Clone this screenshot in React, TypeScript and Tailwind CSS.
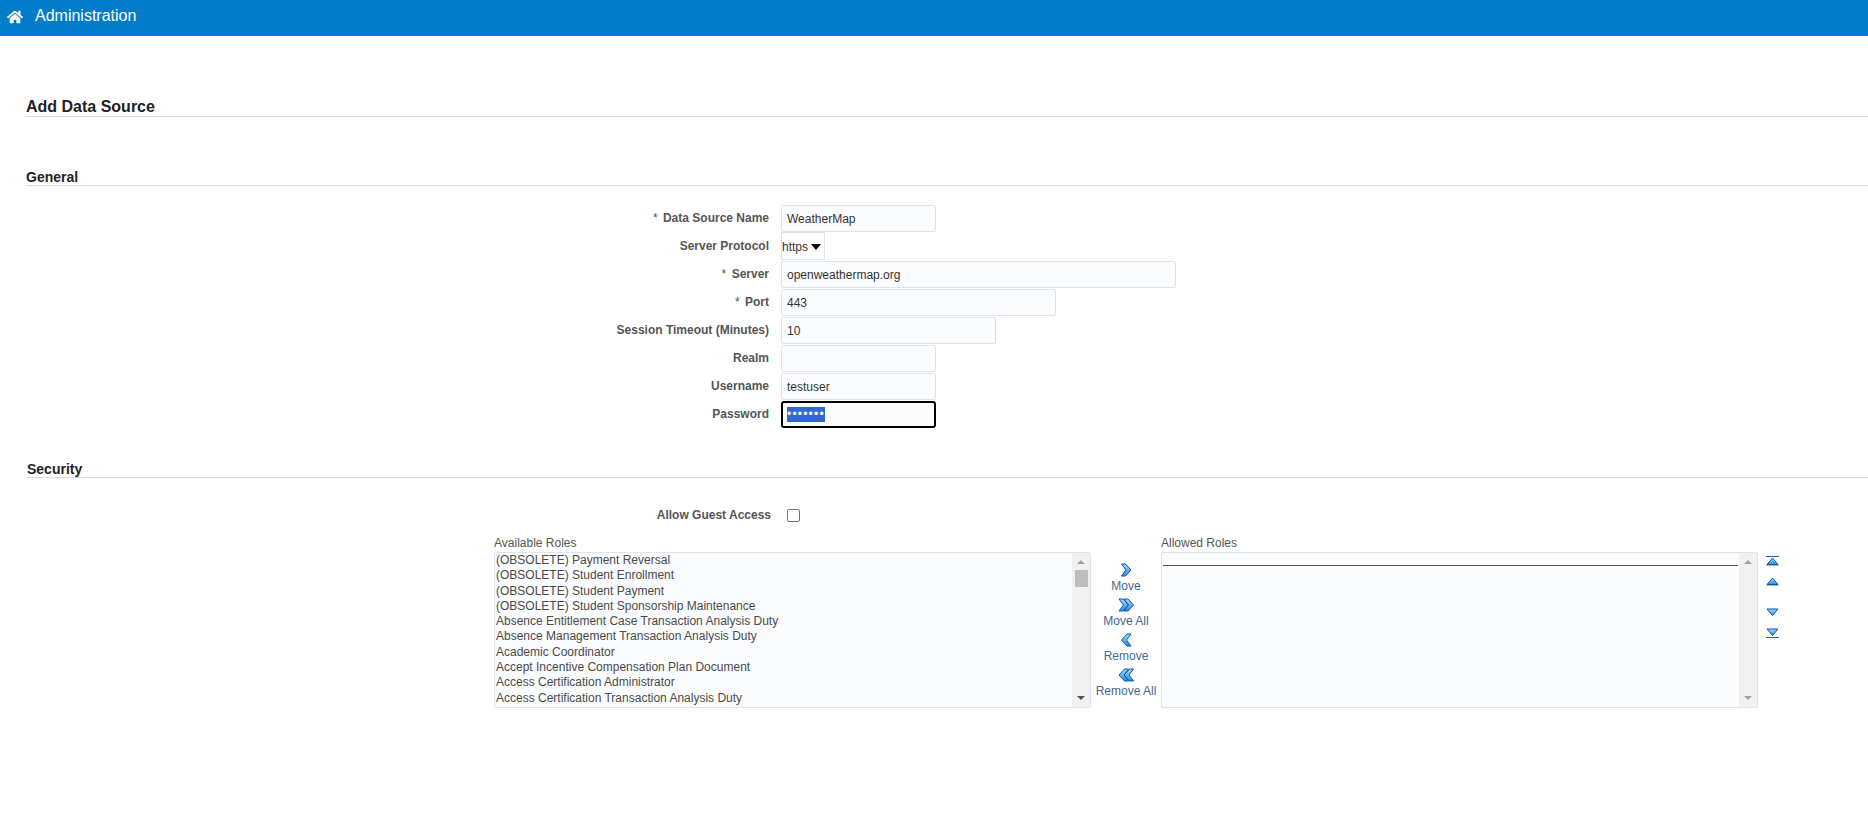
import { FaHome } from "react-icons/fa";

const roles = [
  "(OBSOLETE) Payment Reversal",
  "(OBSOLETE) Student Enrollment",
  "(OBSOLETE) Student Payment",
  "(OBSOLETE) Student Sponsorship Maintenance",
  "Absence Entitlement Case Transaction Analysis Duty",
  "Absence Management Transaction Analysis Duty",
  "Academic Coordinator",
  "Accept Incentive Compensation Plan Document",
  "Access Certification Administrator",
  "Access Certification Transaction Analysis Duty",
];

function Row({ label, required, children }: { label: string; required?: boolean; children: React.ReactNode }) {
  return (
    <div className="flex items-center h-[28px]">
      <div className="w-[769px] text-right text-[12px] font-bold text-[#555] leading-none">
        {required && <span className="font-normal mr-[2px]">* </span>}
        {label}
      </div>
      <div className="ml-[12px] flex">{children}</div>
    </div>
  );
}

function TextBox({ width, value }: { width: string; value?: string }) {
  return (
    <div className={`${width} h-[27px] bg-[#fbfcfe] border border-[#dfe4ea] rounded-[2px] px-[5px] pt-[1px] flex items-center text-[12px] text-[#333]`}>
      {value}
    </div>
  );
}

function ChevronDefs() {
  return (
    <svg width="0" height="0" className="absolute">
      <defs>
        <linearGradient id="shuttleBlue" x1="0" y1="0" x2="0" y2="1">
          <stop offset="0" stopColor="#a5dafc" />
          <stop offset="1" stopColor="#2a8be6" />
        </linearGradient>
      </defs>
    </svg>
  );
}

function Chevron({ dir, double }: { dir: "left" | "right"; double?: boolean }) {
  const single = dir === "right" ? "M1 1 L5 1 L10.5 7 L5 13 L1 13 L5.5 7 Z" : "M10.5 1 L6.5 1 L1 7 L6.5 13 L10.5 13 L6 7 Z";
  const shift = double ? (dir === "right" ? ["translate(0 0)", "translate(5 0)"] : ["translate(5 0)", "translate(0 0)"]) : ["translate(2.5 0)"];
  return (
    <svg width="16" height="14" viewBox="0 0 16 14" className="block">
      {shift.map((t) => (
        <path key={t} d={single} transform={t} fill="url(#shuttleBlue)" stroke="#0a55a8" strokeWidth="1" strokeLinejoin="round" />
      ))}
    </svg>
  );
}

function ShuttleButton({ label, dir, double }: { label: string; dir: "left" | "right"; double?: boolean }) {
  return (
    <div className="flex flex-col items-center h-[35px]">
      <Chevron dir={dir} double={double} />
      <div className="text-[12px] leading-[14px] mt-[2px] text-[#44698f] whitespace-nowrap">{label}</div>
    </div>
  );
}

function ReorderIcon({ up, bar }: { up?: boolean; bar?: boolean }) {
  return (
    <svg width="13" height="10" viewBox="0 0 13 10" className="block">
      {up ? (
        <>
          {bar && <rect x="0" y="0" width="13" height="1" fill="#1f5fb8" />}
          <path d="M6.5 2 L12 8.5 L1 8.5 Z" fill="url(#shuttleBlue)" stroke="#0a55a8" strokeWidth="1" />
          <rect x="0" y="9" width="13" height="1" fill="#b5b9c0" />
        </>
      ) : (
        <>
          <path d="M1 1 L12 1 L6.5 7.5 Z" fill="url(#shuttleBlue)" stroke="#0a55a8" strokeWidth="1" />
          {bar && <rect x="0" y="9" width="13" height="1" fill="#1f5fb8" />}
        </>
      )}
    </svg>
  );
}

function ScrollBar({ thumb, dark }: { thumb?: boolean; dark?: boolean }) {
  return (
    <div className="w-[18px] bg-[#f1f1f1] flex flex-col items-center justify-between py-[7px]">
      <div className="flex flex-col items-center w-full">
        <div className="w-0 h-0 border-x-[4px] border-x-transparent border-b-[4px] border-b-[#a3a3a3]" />
        {thumb && <div className="w-[13px] h-[17px] bg-[#bdbdbd] mt-[6px]" />}
      </div>
      <div className={`w-0 h-0 border-x-[4px] border-x-transparent border-t-[4px] ${dark ? "border-t-[#505050]" : "border-t-[#a3a3a3]"}`} />
    </div>
  );
}

export default function App() {
  return (
    <div className="w-full min-h-screen bg-white font-['Liberation_Sans',Arial,sans-serif]">
      <ChevronDefs />

      {/* Header */}
      <div className="h-[36px] bg-[#007cc8] flex items-center pl-[7px] pb-[4px] text-white">
        <FaHome className="w-[16px] h-[16px] mt-[1px]" />
        <span className="ml-[12px] text-[16px]">Administration</span>
      </div>

      <div className="pl-[26px]">
        <div className="mt-[62px] h-[19px] border-b border-[#d6dde6] text-[16px] font-bold leading-[18px] text-[#222]">
          Add Data Source
        </div>

        <div className="mt-[53px] h-[16px] border-b border-[#d6dde6] text-[14px] font-bold leading-[14px] text-[#222]">
          General
        </div>
      </div>

      {/* General form */}
      <div className="mt-[18px] flex flex-col">
        <Row label="Data Source Name" required>
          <TextBox width="w-[155px]" value="WeatherMap" />
        </Row>
        <Row label="Server Protocol">
          <div className="w-[44px] h-[28px] border border-[#dfe4ea] flex items-center pt-[1px] text-[12px] text-[#333]">
            https
            <span className="ml-[3px] w-0 h-0 border-x-[5.5px] border-x-transparent border-t-[6px] border-t-black" />
          </div>
        </Row>
        <Row label="Server" required>
          <TextBox width="w-[395px]" value="openweathermap.org" />
        </Row>
        <Row label="Port" required>
          <TextBox width="w-[275px]" value="443" />
        </Row>
        <Row label="Session Timeout (Minutes)">
          <TextBox width="w-[215px]" value="10" />
        </Row>
        <Row label="Realm">
          <TextBox width="w-[155px]" />
        </Row>
        <Row label="Username">
          <TextBox width="w-[155px]" value="testuser" />
        </Row>
        <Row label="Password">
          <div className="w-[155px] h-[27px] bg-[#fbfcfe] border-2 border-black rounded-[3px] pl-[4px] flex items-center">
            <span className="bg-[#3367d1] text-white text-[12px] leading-[15px] h-[15px] tracking-[1.2px]">•••••••</span>
          </div>
        </Row>
      </div>

      {/* Security */}
      <div className="pl-[27px] mt-[34px]">
        <div className="h-[16px] border-b border-[#d6dde6] text-[14px] font-bold leading-[14px] text-[#222]">
          Security
        </div>
      </div>

      <div className="mt-[29px] flex items-center h-[16px]">
        <div className="w-[771px] text-right text-[12px] font-bold text-[#555]">Allow Guest Access</div>
        <div className="ml-[16px] w-[13px] h-[13px] border border-[#767676] rounded-[2px] bg-white" />
      </div>

      {/* Role shuttle */}
      <div className="mt-[13px] pl-[494px] flex items-start">
        <div className="w-[597px]">
          <div className="text-[12px] leading-[14px] h-[16px] text-[#555]">Available Roles</div>
          <div className="h-[156px] border border-[#dfe4ea] rounded-[2px] bg-[#fbfcfe] flex">
            <div className="flex-1 pl-[1px] text-[12px] leading-[15.3px] text-[#4a4a4a] overflow-hidden">
              {roles.map((role) => (
                <div key={role}>{role}</div>
              ))}
            </div>
            <ScrollBar thumb dark />
          </div>
        </div>

        <div className="w-[70px] pt-[27px] flex flex-col items-center">
          <ShuttleButton label="Move" dir="right" />
          <ShuttleButton label="Move All" dir="right" double />
          <ShuttleButton label="Remove" dir="left" />
          <ShuttleButton label="Remove All" dir="left" double />
        </div>

        <div className="w-[597px]">
          <div className="text-[12px] leading-[14px] h-[16px] text-[#555]">Allowed Roles</div>
          <div className="h-[156px] border border-[#dfe4ea] rounded-[2px] bg-[#fbfcfe] flex">
            <div className="flex-1 pl-[1px] pr-[1px] pt-[12px]">
              <div className="h-px bg-[#555]" />
            </div>
            <ScrollBar />
          </div>
        </div>

        <div className="ml-[8px] pt-[20px] flex flex-col">
          <ReorderIcon up bar />
          <div className="mt-[10px]"><ReorderIcon up /></div>
          <div className="mt-[22px]"><ReorderIcon /></div>
          <div className="mt-[10px]"><ReorderIcon bar /></div>
        </div>
      </div>
    </div>
  );
}
